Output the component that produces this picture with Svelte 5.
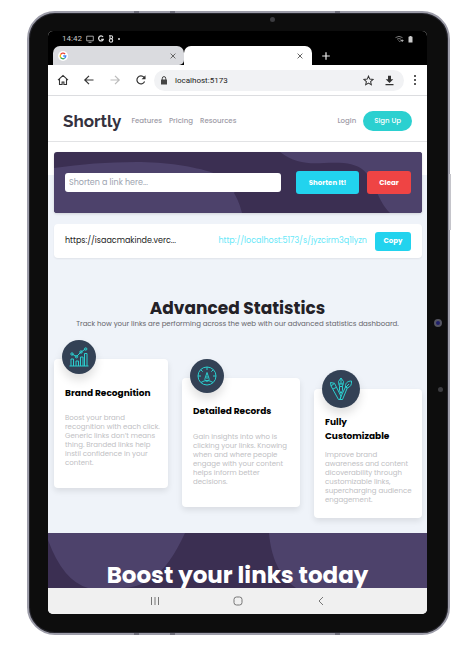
<script>
  const links = ['Features', 'Pricing', 'Resources'];
  const cards = [
    {
      icon: 'chart',
      title: ['Brand Recognition'],
      lines: ['Boost your brand', 'recognition with each click.', 'Generic links don’t means', 'thing. Branded links help', 'instil confidence in your', 'content.']
    },
    {
      icon: 'gauge',
      title: ['Detailed Records'],
      lines: ['Gain insights into who is', 'clicking your links. Knowing', 'when and where people', 'engage with your content', 'helps inform better', 'decisions.']
    },
    {
      icon: 'tools',
      title: ['Fully', 'Customizable'],
      lines: ['Improve brand', 'awareness and content', 'dicoverability through', 'customizable links,', 'supercharging audience', 'engagement.']
    }
  ];
  let url = $state('');
</script>

<div class="device">
  <i class="side"></i>
  <i class="seam s1"></i><i class="seam s2"></i><i class="seam s3"></i>
  <i class="seam s4"></i><i class="seam s5"></i><i class="seam s6"></i>
  <i class="dot upper"></i>
  <i class="lens"></i>
  <i class="dot right"></i>

  <div class="screen">
    <div class="status">
      <span>14:42</span>
      <svg width="8" height="8" viewBox="0 0 8 8" fill="none" stroke="#c4c4c4"><path d="M.7 1.2h6.6v4.6H.7zM2.5 7.3h3" stroke-width=".8" /></svg>
      <svg width="6" height="8" viewBox="0 0 6 8" fill="none" stroke="#ddd" stroke-width="1.3"><path d="M5 2A2.4 2.5 0 1 0 5.3 4.3H3.2" /></svg>
      <svg class="eight" width="6" height="8" viewBox="0 0 6 8" fill="none" stroke="#ddd" stroke-width="1.1"><path d="M1 .8h2.2a1.4 1.4 0 0 1 0 2.9h-.6M2 .8v3" /><circle cx="3" cy="5.5" r="1.7" /></svg>
      <b></b>
      <svg class="wifi" width="9" height="8" viewBox="0 0 9 8" fill="none" stroke="#777" stroke-width="1"><path d="M.5 2.6Q4 0 7.5 2.6M2 4.2q2-1.3 4 0M3.4 5.5l1.2 1 2-1.3" /><path d="M6 5.5h2.5M7.2 4.5v2.5" stroke="#aaa" /></svg>
      <svg width="5" height="8" viewBox="0 0 5 8" fill="#ccc"><path d="M1.5 1h2v.8h1V7.4h-4V1.8h1z" /></svg>
    </div>

    <div class="tabs">
      <div class="tab idle">
        <svg width="10" height="10" viewBox="0 0 10 10" fill="none" stroke-width="1.3">
          <circle cx="5" cy="5" r="5" fill="#fff" />
          <path d="M7.1 3.1A2.8 2.8 0 0 0 2.6 3.6" stroke="#ea4335" />
          <path d="M2.6 3.6a2.8 2.8 0 0 0 0 2.8" stroke="#fbbc05" />
          <path d="M2.6 6.4a2.8 2.8 0 0 0 4 .9" stroke="#34a853" />
          <path d="M6.6 7.3A2.8 2.8 0 0 0 7.8 5H5.2" stroke="#4285f4" />
        </svg>
        <button aria-label="Close tab"><svg width="6" height="6" viewBox="0 0 6 6"><path d="M.6.6l4.8 4.8M5.4.6.6 5.4" stroke="#666" /></svg></button>
      </div>
      <div class="tab active">
        <button aria-label="Close tab"><svg width="6" height="6" viewBox="0 0 6 6"><path d="M.6.6l4.8 4.8M5.4.6.6 5.4" stroke="#666" /></svg></button>
      </div>
      <button class="plus" aria-label="New tab"><svg width="8" height="8" viewBox="0 0 8 8"><path d="M4 .2v7.6M.2 4h7.6" stroke="#eee" stroke-width="1.2" /></svg></button>
    </div>

    <div class="toolbar">
      <button aria-label="Home"><svg width="12" height="12" viewBox="0 0 12 12" fill="none" stroke="#333" stroke-width="1.1"><path d="M1 6.200 6 1.400l5 4.800M2.500 5v5.500h2.600V8h1.800v2.500h2.600V5" /></svg></button>
      <button aria-label="Back"><svg width="12" height="12" viewBox="0 0 12 12" fill="none" stroke="#333" stroke-width="1.2"><path d="M10.5 6H2M6 1.8 1.8 6 6 10.2" /></svg></button>
      <button aria-label="Forward"><svg width="12" height="12" viewBox="0 0 12 12" fill="none" stroke="#bbb" stroke-width="1.2"><path d="M1.500 6H10M6 1.8 10.200 6 6 10.2" /></svg></button>
      <button aria-label="Reload"><svg width="12" height="12" viewBox="0 0 12 12" fill="none" stroke="#333" stroke-width="1.2"><path d="M9.600 7.500A4 4 0 1 1 8.900 3.200L10 4.400" /><path d="M10.500 1.200v4H6.600z" fill="#333" stroke="none" /></svg></button>
      <div class="address">
        <svg width="8" height="9" viewBox="0 0 8 9"><path d="M1 3.500h6V8.400H1z" fill="#444" /><path d="M2.300 3.800V2.300a1.700 1.700 0 0 1 3.400 0v1.500" fill="none" stroke="#444" /></svg>
        <span>localhost:5173</span>
        <button aria-label="Bookmark"><svg width="11" height="11" viewBox="0 0 12 12" fill="none" stroke="#333" stroke-width="1.1"><path d="m6 1.200 1.400 3.300 3.600.3-2.700 2.400.8 3.500L6 8.800l-3.100 1.900.8-3.500L1 4.800l3.600-.3z" /></svg></button>
        <button aria-label="Download"><svg width="11" height="11" viewBox="0 0 11 11" fill="#333"><path d="M4 .8h3v3.500h2.300L5.500 8 1.700 4.300H4zM1.500 9h8v1.200h-8z" /></svg></button>
      </div>
      <button class="more" aria-label="Menu"><svg width="4" height="12" viewBox="0 0 4 12" fill="#333"><circle cx="2" cy="2" r="1.100" /><circle cx="2" cy="6" r="1.100" /><circle cx="2" cy="10" r="1.100" /></svg></button>
    </div>

    <nav>
      <a class="logo" href="/">Shortly</a>
      {#each links as link}<a href="/">{link}</a>{/each}
      <a class="login" href="/">Login</a>
      <button class="signup">Sign Up</button>
    </nav>

    <main>
      <div class="top">
        <form class="shorten">
          <svg class="bg" viewBox="0 0 368 61" preserveAspectRatio="none" fill="#4d426b">
            <path d="M0 16Q40 10 82 10c60 0 112 18 98 31 4 7 6 12 8 20H0z" />
            <path d="M226 0c14 11 28 12 44 11 36-2 42 5 52 27 4 10 8 17 14 23h32V0z" />
          </svg>
          <input aria-label="Link" placeholder="Shorten a link here..." bind:value={url} />
          <button type="button">Shorten It!</button>
          <button type="button" class="clear">Clear</button>
        </form>
        <div class="result">
          <span>https://isaacmakinde.verc...</span>
          <a href="/">http://localhost:5173/s/jyzcirm3q1lyzn</a>
          <button>Copy</button>
        </div>
      </div>

      <h2>Advanced Statistics</h2>
      <p class="sub">Track how your links are performing across the web with our advanced statistics dashboard.</p>

      <div class="cards">
        {#each cards as card}
          <article class={card.icon}>
            <div class="badge">
              {#if card.icon === 'chart'}
                <svg width="20" height="20" viewBox="0 0 20 20"><path d="M.5 19h19M2 19v-7h2.500v7M7 19v-5h2.500v5M11.500 19V10H14v9M15.500 19V6.500H18V19M3 7l4.500 2.500L12 5l4.500-3" /><circle cx="3" cy="7" r="1.200" /><circle cx="7.500" cy="9.700" r="1.200" /><circle cx="12" cy="5" r="1.200" /><circle cx="16.700" cy="2" r="1.200" /></svg>
              {:else if card.icon === 'gauge'}
                <svg width="20" height="20" viewBox="0 0 20 20"><circle cx="10" cy="10" r="9" /><path d="M10 1v3M1 10h3M16 10h3M3.700 3.700l2 2M16.300 3.700l-2 2M4 16.500q6-4 12 0M10 6.500 8 12.500a2.100 2.100 0 1 0 4 0zM10 10v3" /></svg>
              {:else}
                <svg width="24" height="24" viewBox="0 0 24 24"><path d="M12 1 9.500 4.500l1 5h3l1-5zM12 1v6M9.500 7h5M10.500 9.500v4l1.500 3 1.500-3v-4M1.500 5.500l4 .8L12 19.300l-1 3.200H9.500L2 9zM2 9l3.500-2.700M4 12l3-1.500M22.500 4c-4 0-6.300 2-6 6l1.800.9c3.200-1 4.500-3 4.200-6.900zM16.500 10 12 19.300l-1 3.200h2.500l4.800-11.600M17 10l3-3" /></svg>
              {/if}
            </div>
            <h3>{#each card.title as t}<span>{t}</span>{/each}</h3>
            <p>{#each card.lines as l}<span>{l}</span>{/each}</p>
          </article>
        {/each}
      </div>

      <section class="boost">
        <svg class="bg" viewBox="0 0 379 55" preserveAspectRatio="none" fill="#4d426b">
          <path d="M0 7V0h137c-10 21-20 38-36 47q-12 8-28 8H40Q15 48 0 7z" />
          <path d="M221 0c2 24 10 43 27 55h131V0z" />
        </svg>
        <h2>Boost your links today</h2>
      </section>
    </main>

    <div class="keys">
      <button aria-label="Recents"><svg width="10" height="10" viewBox="0 0 10 10"><path d="M1.500 1v8M5 1v8M8.500 1v8" /></svg></button>
      <button aria-label="Home screen"><svg width="10" height="10" viewBox="0 0 10 10"><rect x="1" y="1" width="8" height="8" rx="2.500" /></svg></button>
      <button aria-label="Go back"><svg width="10" height="10" viewBox="0 0 10 10"><path d="M7 1 3 5l4 4" /></svg></button>
    </div>
  </div>
</div>

<style>
  :global(body) { background: #fff; }
  * { box-sizing: border-box; }
  button { border: 0; padding: 0; background: none; font: inherit; color: inherit; display: flex; align-items: center; justify-content: center; }
  a { color: inherit; text-decoration: none; }
  h2, h3, p { margin: 0; }
  svg { flex: none; display: block; }

  .device {
    position: relative;
    margin: 11px 19px 11px 27px;
    padding: 18px 21px 19px 19px;
    border: 2px solid #9c9ca8;
    border-radius: 28px;
    background: #0d0d0d;
    box-shadow: inset 0 0 0 1px #25252c;
    font-family: Poppins, Inter, "Open Sans", sans-serif;
  }
  .side { position: absolute; right: -3px; top: 161px; width: 2px; height: 56px; background: #c4c4ca; }
  .seam { position: absolute; background: #70707c; width: 5px; height: 2px; }
  .s1, .s2, .s3 { top: -2px; }
  .s4, .s5, .s6 { bottom: -2px; }
  .s1, .s4 { left: 105px; }
  .s2, .s5 { left: 141px; }
  .s3, .s6 { right: 108px; }
  .dot { position: absolute; width: 5px; height: 5px; border-radius: 50%; background: #3c3c40; }
  .upper { top: 4px; left: 241px; }
  .right { right: 5px; top: 374px; }
  .lens { position: absolute; right: 6px; top: 306px; width: 8px; height: 8px; border-radius: 50%; border: 2px solid #555562; background: #20206a; }

  .screen { border-radius: 5px; overflow: hidden; background: #fff; }
  .status { display: flex; align-items: center; gap: 4px; height: 15px; padding: 0 14px; background: #000; color: #c8c8c8; font: 8px/15px Roboto, sans-serif; }
  .status b { width: 2px; height: 2px; border-radius: 50%; background: #ddd; }
  .wifi { margin-left: auto; }

  .tabs { display: flex; height: 19px; padding-left: 5px; background: #000; }
  .tab { display: flex; align-items: center; justify-content: space-between; border-radius: 7px 7px 0 0; }
  .idle { flex: 129; padding: 0 8px 0 5px; background: #dadbdf; border-radius: 7px 7px 5px 0; }
  .active { flex: 130; justify-content: flex-end; padding-right: 9px; background: #fff; }
  .plus { flex: 115; justify-content: flex-start; padding-left: 10px; }

  .toolbar { display: flex; align-items: center; gap: 14px; height: 31px; padding: 0 10px 0 9px; border-bottom: 1px solid #dcdde0; }
  .address { display: flex; flex: 1; align-items: center; gap: 10px; height: 21px; margin-left: -7px; padding: 0 9px 0 6px; border-radius: 11px; background: #f1f2f4; color: #222; font: 8px/21px Roboto, "Liberation Sans", sans-serif; }
  .address span { flex: 1; margin-left: -3px; }
  .more { margin-left: -5px; }

  nav { display: flex; align-items: center; gap: 7px; height: 46px; padding: 4px 15px 0; border-bottom: 1px solid #e2e3e5; color: #9c9aa5; font-size: 7px; font-weight: 500; }
  .logo { margin-right: 3px; color: #35323e; font: 700 17px/20px Raleway, "Open Sans", sans-serif; }
  .login { margin-left: auto; }
  .signup { height: 20px; padding: 0 11px; border-radius: 10px; background: #2bd0d0; color: #fff; }

  main { background: linear-gradient(#fff 33px, #eff3f9 33px); }
  .top { display: flex; flex-direction: column; gap: 11px; padding: 10px 5px 0 6px; }
  .shorten { position: relative; display: flex; align-items: center; height: 61px; padding: 0 11px; border-radius: 3px; overflow: hidden; background: #3b2f52; box-shadow: 0 1px 3px #0002; font-size: 7px; font-weight: 700; color: #fff; }
  .bg { position: absolute; inset: 0; width: 100%; height: 100%; }
  .shorten > :not(.bg) { position: relative; }
  input { flex: 1; min-width: 0; height: 19px; margin-right: 15px; padding: 0 4px; border: 0; border-radius: 3px; background: #fff; font: 8px/19px Poppins, Inter, sans-serif; }
  input::placeholder { color: #9ca3af; }
  .shorten button { flex: none; width: 63px; height: 23px; border-radius: 3px; background: #22d3ee; }
  .shorten .clear { width: 44px; margin-left: 8px; background: #ef4444; }
  .result { display: flex; align-items: center; gap: 8px; height: 34px; padding: 0 11px; border-radius: 4px; background: #fff; box-shadow: 0 1px 2px #0001; font-size: 8px; color: #222; }
  .result a { margin-left: auto; color: #67e8f9; }
  .result button { width: 36px; height: 19px; border-radius: 3px; background: #22d3ee; color: #fff; font-size: 7px; font-weight: 700; }

  main h2 { text-align: center; color: #232127; font-size: 17px; line-height: 24px; margin-top: 38px; }
  .sub { text-align: center; color: #65656b; font-size: 7px; line-height: 8px; white-space: nowrap; }

  .cards { display: grid; grid-template-columns: minmax(0, 114fr) minmax(0, 118fr) minmax(0, 108fr); gap: 14px; align-items: start; padding: 31px 5px 15px 6px; }
  article { position: relative; height: 129px; padding: 27px 11px 0; border-radius: 4px; background: #fff; box-shadow: 0 3px 6px #00000018; }
  article.gauge { margin-top: 19px; padding-top: 26px; }
  article.tools { margin-top: 30px; padding-top: 26px; }
  .badge { position: absolute; left: 8px; top: -19px; display: grid; place-items: center; width: 34px; height: 34px; border-radius: 50%; background: #334155; box-shadow: 0 6px 10px #00000020; }
  .tools .badge { width: 38px; height: 38px; }
  .badge svg { fill: none; stroke: #2bd0d0; stroke-width: 1; }
  h3 { font-size: 9px; line-height: 14px; color: #000; white-space: nowrap; }
  h3 span, article p span { display: block; }
  article p { margin-top: 13px; color: #c0c0c3; font-size: 7px; line-height: 9px; white-space: nowrap; }
  article.gauge p { margin-top: 14px; }
  article.tools p { margin-top: 7px; }

  .boost { position: relative; height: 55px; padding-top: 26px; overflow: hidden; background: #3b2f52; }
  .boost h2 { position: relative; margin: 0; color: #fff; font-size: 23px; line-height: 32px; }
  .keys { display: flex; align-items: center; justify-content: center; gap: 73px; height: 26px; background: #f0f0f0; }
  .keys svg { fill: none; stroke: #777; stroke-width: 1; }
</style>
